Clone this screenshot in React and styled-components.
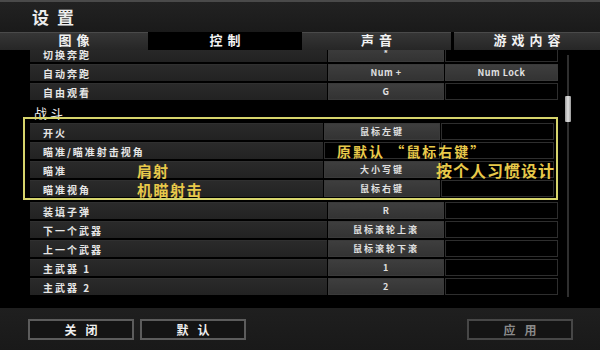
import React from "react";
import styled, { createGlobalStyle } from "styled-components";

const GlobalStyle = createGlobalStyle`
  html, body {
    margin: 0;
    padding: 0;
    background: #000;
  }
  body {
    font-family: "Noto Sans CJK SC", "Noto Sans", "Liberation Sans", sans-serif;
  }
`;

const Window = styled.div`
  width: 600px;
  height: 350px;
  display: flex;
  flex-direction: column;
  background: #000;
  overflow: hidden;
`;

const Header = styled.div`
  height: 30px;
  flex-shrink: 0;
  border-top: 2px solid #4a4a4a;
  background: linear-gradient(#222, #1a1a1a);
  display: flex;
  align-items: center;
  padding-left: 32px;
  box-sizing: content-box;
`;

const Title = styled.h1`
  margin: 0 0 2px;
  font-size: 17px;
  font-weight: 700;
  letter-spacing: 8px;
  color: #ececec;
  line-height: 1;
`;

const TabBar = styled.div`
  height: 18px;
  flex-shrink: 0;
  display: grid;
  grid-template-columns: 148px 148px 149px 146px;
  column-gap: 3px;
  background: #000;
`;

const Tab = styled.div`
  display: flex;
  align-items: center;
  justify-content: center;
  padding-bottom: 3px;
  font-size: 13px;
  line-height: 14px;
  font-weight: 700;
  letter-spacing: 5px;
  text-indent: 5px;
  color: #f2f2f2;
  background: ${({ $active }) =>
    $active ? "#000" : "linear-gradient(#363636, #262626)"};
  border-top: 1px solid ${({ $active }) => ($active ? "#000" : "#4a4a4a")};
  box-sizing: border-box;
`;

const Body = styled.div`
  flex: 1;
  display: flex;
  flex-direction: column;
  background: #000;
  min-height: 0;
`;

const Viewport = styled.div`
  position: relative;
  height: 247px;
  flex-shrink: 0;
  overflow: hidden;
  padding-left: 30px;
  display: flex;
  flex-direction: column;
`;

const List = styled.div`
  width: 528px;
  margin-top: -5px;
  display: flex;
  flex-direction: column;
  gap: 2px;
  flex-shrink: 0;
`;

const RowBox = styled.div`
  position: relative;
  height: 17px;
  flex-shrink: 0;
  display: grid;
  grid-template-columns: 1fr 116px 113px;
  column-gap: 1px;
`;

const LabelCell = styled.div`
  background: linear-gradient(#2a2a2a, #222);
  border-top: 1px solid #303030;
  box-sizing: border-box;
  padding-left: 13px;
  display: flex;
  align-items: center;
  font-size: 10px;
  font-weight: 700;
  letter-spacing: 2px;
  color: #e6e6e6;
  white-space: nowrap;
`;

const KeyCell = styled.div`
  box-sizing: border-box;
  display: flex;
  align-items: center;
  justify-content: center;
  font-size: 9px;
  font-weight: 700;
  letter-spacing: ${({ $latin }) => ($latin ? "0.5px" : "2px")};
  color: #e0e0e0;
  white-space: nowrap;
  background: ${({ $empty }) =>
    $empty ? "#000" : "linear-gradient(#3e3e3e, #333)"};
  border: 1px solid ${({ $empty }) => ($empty ? "#2e2e2e" : "#3a3a3a")};
`;

const SectionTitle = styled.div`
  height: 15px;
  flex-shrink: 0;
  padding-left: 4px;
  font-size: 13px;
  line-height: 22px;
  letter-spacing: 3px;
  color: #ededed;
  margin-bottom: -2px;
`;

const Highlight = styled.div`
  position: relative;
  margin-left: -7px;
  border: 2px solid #d6d46c;
  padding: 4px 2px 1px 5px;
  display: flex;
  flex-direction: column;
  gap: 2px;
  flex-shrink: 0;
`;

const Note = styled.span`
  position: absolute;
  top: 50%;
  left: ${({ $left }) => $left}px;
  transform: translateY(-50%);
  font-size: ${({ $size }) => $size}px;
  font-weight: 700;
  letter-spacing: ${({ $spacing }) => $spacing}px;
  color: #e8c94a;
  white-space: nowrap;
  line-height: 1;
`;

const ScrollTrack = styled.div`
  position: absolute;
  left: 567px;
  top: 5px;
  width: 2px;
  bottom: 0;
  background: #2f2f2f;
`;

const ScrollThumb = styled.div`
  position: absolute;
  left: -2px;
  top: 41px;
  width: 6px;
  height: 26px;
  background: linear-gradient(90deg, #9a9a9a, #e0e0e0, #9a9a9a);
  border-radius: 1px;
`;

const Footer = styled.div`
  margin-top: auto;
  height: 42px;
  flex-shrink: 0;
  background: linear-gradient(#1f1f1f, #191919);
  display: flex;
  align-items: center;
  padding: 0 27px 0 28px;
  gap: 6px;
`;

const FooterButton = styled.button`
  width: 106px;
  height: 21px;
  box-sizing: border-box;
  background: #141414;
  border: 2px solid ${({ $disabled }) => ($disabled ? "#474747" : "#5c5c5c")};
  color: ${({ $disabled }) => ($disabled ? "#8a8a8a" : "#f0f0f0")};
  font-family: inherit;
  font-size: 12px;
  font-weight: 700;
  letter-spacing: 9px;
  text-indent: 9px;
  display: flex;
  align-items: center;
  justify-content: center;
  padding: 0;
  ${({ $right }) => ($right ? "margin-left: auto;" : "")}
`;

const isLatin = (s) => /^[\x00-\x7F]*$/.test(s);

function Row({ label, k1, k2, children }) {
  return (
    <RowBox>
      <LabelCell>{label}</LabelCell>
      <KeyCell $empty={!k1} $latin={k1 && isLatin(k1)}>{k1}</KeyCell>
      <KeyCell $empty={!k2} $latin={k2 && isLatin(k2)}>{k2}</KeyCell>
      {children}
    </RowBox>
  );
}

const tabs = ["图像", "控制", "声音", "游戏内容"];

const topRows = [
  { label: "切换奔跑", k1: "*" },
  { label: "自动奔跑", k1: "Num +", k2: "Num Lock" },
  { label: "自由观看", k1: "G" },
];

const bottomRows = [
  { label: "装填子弹", k1: "R" },
  { label: "下一个武器", k1: "鼠标滚轮上滚" },
  { label: "上一个武器", k1: "鼠标滚轮下滚" },
  { label: "主武器 1", k1: "1" },
  { label: "主武器 2", k1: "2" },
  { label: "副武器", k1: "3" },
];

export default function App() {
  return (
    <Window>
      <GlobalStyle />
      <Header>
        <Title>设置</Title>
      </Header>
      <TabBar>
        {tabs.map((t) => (
          <Tab key={t} $active={t === "控制"}>
            {t}
          </Tab>
        ))}
      </TabBar>
      <Body>
        <Viewport>
          <List>
            {topRows.map((r) => (
              <Row key={r.label} {...r} />
            ))}
            <SectionTitle>战斗</SectionTitle>
            <Highlight>
              <Row label="开火" k1="鼠标左键" />
              <Row label="瞄准/瞄准射击视角">
                <Note $left={307} $size={14} $spacing={2}>
                  原默认 “鼠标右键”
                </Note>
              </Row>
              <Row label="瞄准" k1="大小写键">
                <Note $left={107} $size={15} $spacing={1}>
                  肩射
                </Note>
                <Note $left={406} $size={16} $spacing={1}>
                  按个人习惯设计
                </Note>
              </Row>
              <Row label="瞄准视角" k1="鼠标右键">
                <Note $left={107} $size={15} $spacing={1.5}>
                  机瞄射击
                </Note>
              </Row>
            </Highlight>
            {bottomRows.map((r) => (
              <Row key={r.label} {...r} />
            ))}
          </List>
          <ScrollTrack>
            <ScrollThumb />
          </ScrollTrack>
        </Viewport>
        <Footer>
          <FooterButton>关闭</FooterButton>
          <FooterButton>默认</FooterButton>
          <FooterButton $disabled $right>
            应用
          </FooterButton>
        </Footer>
      </Body>
    </Window>
  );
}
